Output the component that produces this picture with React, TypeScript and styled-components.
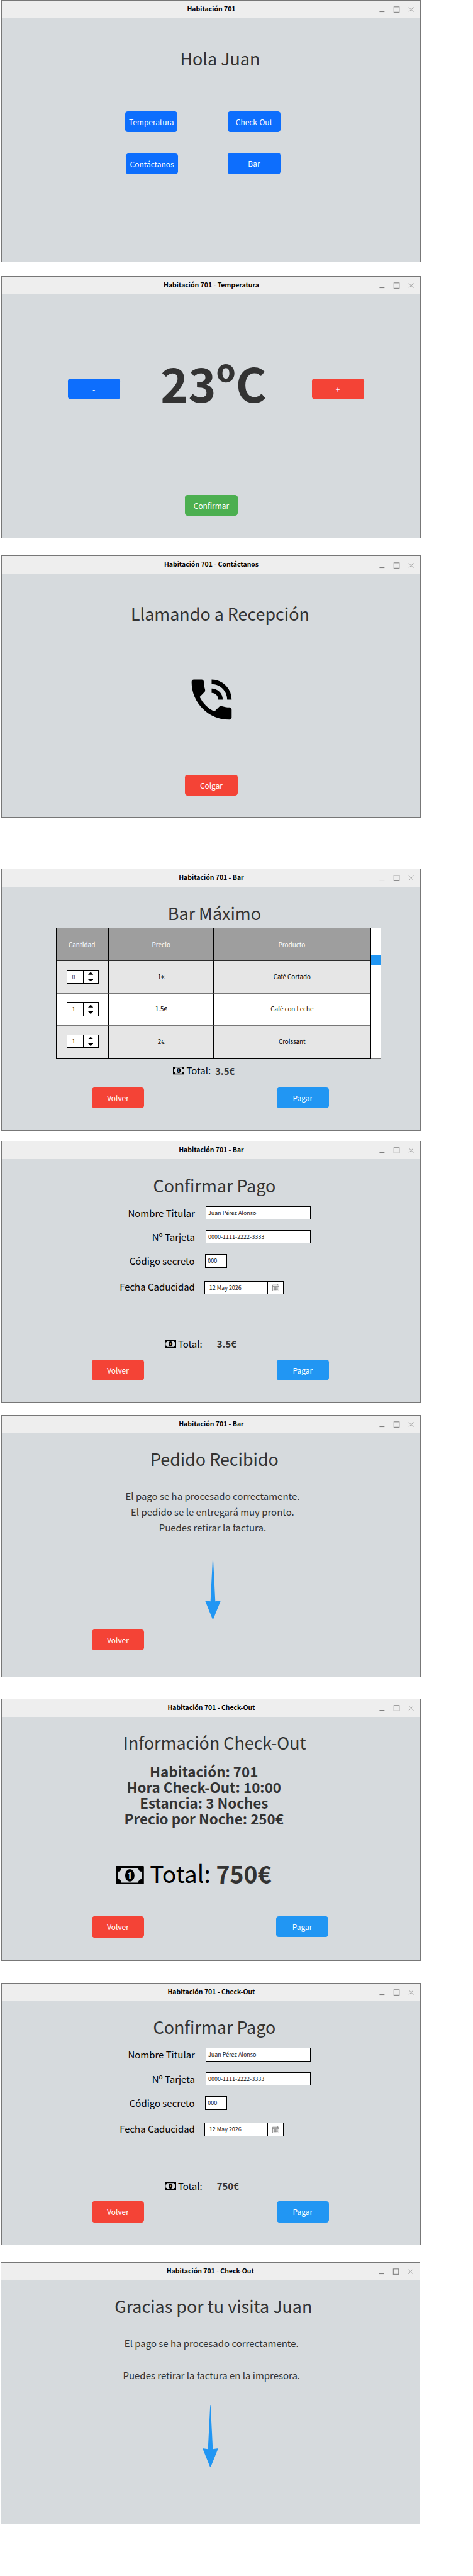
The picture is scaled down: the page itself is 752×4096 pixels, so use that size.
import React from "react";
import styled, { createGlobalStyle } from "styled-components";
import { MdPhoneInTalk } from "react-icons/md";

const SCALE = 0.8326;
const u = (n: number) => `${(n * SCALE).toFixed(3)}px`;

const colors = {
  ink: "#333333",
  frame: "#777777",
  bar: "#eeeeee",
  body: "#d6dadd",
  primary: "#0d6efd",
  danger: "#f44336",
  success: "#4caf50",
  info: "#2196f3",
};

const GlobalStyle = createGlobalStyle`
  *, *::before, *::after { box-sizing: border-box; }
  body { margin: 0; background: #ffffff; }
  #root { font-family: "Noto Sans CJK JP", "Noto Sans", sans-serif; }
`;

const Page = styled.main`
  display: flex;
  flex-direction: column;
  align-items: flex-start;
  min-height: 4096px;
  padding-left: ${u(3)};
  background: #ffffff;
`;

const Frame = styled.section<{ $gap: number; $outdent?: number }>`
  display: flex;
  flex-direction: column;
  flex: none;
  width: ${u(801)};
  height: ${u(501)};
  margin-top: ${(p) => u(p.$gap)};
  margin-left: ${(p) => u(-(p.$outdent ?? 0))};
  border: 1px solid ${colors.frame};
  background: ${colors.body};
`;

const TitleBar = styled.header`
  display: grid;
  grid-template-columns: 1fr auto 1fr;
  align-items: center;
  flex: none;
  height: ${u(34)};
  padding-bottom: ${u(2)};
  background: ${colors.bar};
`;

const Title = styled.h2`
  grid-column: 2;
  margin: 0;
  font-size: ${u(12.56)};
  line-height: ${u(20)};
  font-weight: 700;
  color: #000000;
  white-space: nowrap;
`;

const Controls = styled.div`
  display: flex;
  justify-content: flex-end;
  padding-right: ${u(12)};
  padding-top: ${u(2)};
  svg { display: block; }
`;

const Body = styled.div`
  display: flex;
  flex-direction: column;
`;

const Heading = styled.h1<{ $gap: number; $shift?: number }>`
  margin: ${(p) => u(p.$gap)} 0 0;
  padding-left: ${(p) => u(2 * (p.$shift ?? 6))};
  text-align: center;
  font-size: ${u(32.3)};
  line-height: ${u(40)};
  font-weight: 400;
  color: ${colors.ink};
`;

const Row = styled.div<{ $gap: number; $indent?: number; $space?: number }>`
  display: flex;
  align-items: flex-start;
  gap: ${(p) => u(p.$space ?? 0)};
  margin-top: ${(p) => u(p.$gap)};
  padding-left: ${(p) => u(p.$indent ?? 0)};
`;

const Centered = styled.div<{ $gap: number; $shift?: number }>`
  display: flex;
  justify-content: center;
  margin-top: ${(p) => u(p.$gap)};
  padding-left: ${(p) => u(2 * (p.$shift ?? 0))};
  svg { display: block; }
`;

const Button = styled.button<{ $color: string; $drop?: number; $nudge?: number }>`
  flex: none;
  width: ${u(100)};
  height: ${u(40)};
  margin: ${(p) => u(p.$drop ?? 0)} 0 0 ${(p) => u(p.$nudge ?? 0)};
  padding: 0;
  border: 0;
  border-radius: ${u(5)};
  background: ${(p) => p.$color};
  color: #ffffff;
  font-family: inherit;
  font-size: ${u(14.35)};
  line-height: ${u(40)};
  text-align: center;
`;

const ButtonColumn = styled.div<{ $space: number }>`
  display: flex;
  flex-direction: column;
  width: ${u(101)};
  gap: ${(p) => u(p.$space)};
`;

const Reading = styled.div`
  width: ${u(366)};
  padding-right: ${u(8.6)};
  text-align: center;
  font-size: ${u(89.7)};
  line-height: ${u(100)};
  font-weight: 700;
  color: ${colors.ink};
  white-space: nowrap;
`;

/* Product table */

const Table = styled.div`
  display: grid;
  grid-template-columns: ${u(100)} ${u(200)} 1fr;
  grid-template-rows: ${u(62)} ${u(62)} ${u(62)} 1fr;
  width: ${u(601)};
  height: ${u(251)};
  border: 1px solid #000000;
`;

const Cell = styled.div<{ $tone: "head" | "odd" | "even"; $last?: boolean; $end?: boolean; $lift?: number }>`
  display: flex;
  align-items: center;
  justify-content: center;
  padding-bottom: ${(p) => u(p.$lift ?? 0)};
  border-right: ${(p) => (p.$end ? "0" : "1px solid #000000")};
  border-bottom: ${(p) => (p.$last ? "0" : p.$tone === "head" ? "1px solid #2b2b2b" : "1px solid #777777")};
  background: ${(p) => ({ head: "#9e9e9e", odd: "#e6e6e6", even: "#ffffff" })[p.$tone]};
  color: ${(p) => (p.$tone === "head" ? "#ffffff" : "#000000")};
  font-size: ${(p) => u(p.$tone === "head" ? 11.95 : 11.75)};
  line-height: ${u(18)};
`;

const HeadLabel = styled.span<{ $pull?: number }>`
  padding-right: ${(p) => u(p.$pull ?? 0)};
`;

const Spinner = styled.div`
  display: flex;
  width: ${u(61)};
  height: ${u(26)};
  border: 1px solid #000000;
  background: #ffffff;
`;

const SpinnerValue = styled.span`
  width: ${u(31)};
  padding-right: ${u(6)};
  border-right: 1px solid #000000;
  text-align: center;
  font-size: ${u(10.8)};
  line-height: ${u(24)};
  color: ${colors.ink};
`;

const SpinnerKeys = styled.span`
  display: flex;
  flex: 1;
  flex-direction: column;
`;

const SpinnerKey = styled.span<{ $upper?: boolean }>`
  display: flex;
  flex: 1;
  align-items: center;
  justify-content: center;
  padding-right: ${u(1)};
  border-bottom: ${(p) => (p.$upper ? "1px solid #777777" : "0")};
`;

const Scrollbar = styled.div`
  width: ${u(19.4)};
  height: ${u(251)};
  padding-top: ${u(50)};
  border: 1px solid ${colors.frame};
  border-left: 0;
  background: #ffffff;
`;

const Thumb = styled.div`
  height: ${u(20)};
  background: ${colors.info};
`;

/* Payment form */

const Label = styled.label<{ $drop?: number; $width?: number }>`
  width: ${(p) => u(p.$width ?? 368)};
  margin-top: ${(p) => u(p.$drop ?? 1.3)};
  text-align: right;
  font-size: ${u(17.95)};
  line-height: ${u(24)};
  color: #000000;
`;

const Field = styled.div<{ $width: number; $pad?: number }>`
  display: flex;
  justify-content: space-between;
  width: ${(p) => u(p.$width)};
  height: ${u(26)};
  padding-left: ${(p) => u(p.$pad ?? 4.2)};
  border: 1px solid #000000;
  background: #ffffff;
  font-size: ${u(10.8)};
  line-height: ${u(24)};
  color: #222222;
  white-space: nowrap;
`;

const PickerKey = styled.span`
  display: flex;
  align-items: center;
  justify-content: center;
  width: ${u(29)};
  border-left: 1px solid #000000;
`;

/* Totals and messages */

const TotalIcon = styled.span<{ $drop: number }>`
  display: block;
  flex: none;
  margin-top: ${(p) => u(p.$drop)};
  svg { display: block; }
`;

const TotalText = styled.span<{ $large?: boolean; $left: number; $strong?: boolean; $drop?: number }>`
  margin-left: ${(p) => u(p.$left)};
  margin-top: ${(p) => u(p.$drop ?? 0)};
  font-size: ${(p) => u(p.$large ? 44.85 : 17.95)};
  line-height: ${(p) => u(p.$large ? 60 : 24)};
  font-weight: ${(p) => (p.$strong ? 700 : 400)};
  color: ${(p) => (p.$strong ? colors.ink : "#000000")};
  white-space: nowrap;
`;

const Message = styled.p<{ $gap: number; $shift: number }>`
  margin: ${(p) => u(p.$gap)} 0 0;
  padding-left: ${(p) => u(2 * p.$shift)};
  text-align: center;
  font-size: ${u(17.97)};
  line-height: ${u(30)};
  color: ${colors.ink};
`;

const Summary = styled.div`
  margin-top: ${u(20.1)};
  padding-right: ${u(28)};
  text-align: center;
  font-size: ${u(26.9)};
  line-height: ${u(30.1)};
  font-weight: 700;
  color: ${colors.ink};
`;

const MoneyIcon = ({ width }: { width: number }) => (
  <svg width={width * SCALE} height={(width * SCALE * 36) / 54} viewBox="0 0 54 36">
    <rect width="54" height="36" rx="1.5" fill="#000" />
    <path d="M11 4H43A7 7 0 0 0 50 11V25A7 7 0 0 0 43 32H11A7 7 0 0 0 4 25V11A7 7 0 0 0 11 4Z" fill={colors.body} />
    <ellipse cx="27" cy="18" rx="9" ry="12" fill="#000" />
    <text x="27" y="25" textAnchor="middle" fontFamily="Liberation Serif, serif" fontWeight="700" fontSize="21" fill={colors.body}>
      1
    </text>
  </svg>
);

const CalendarIcon = () => (
  <svg width={13 * SCALE} height={13 * SCALE} viewBox="0 0 13 13" fill="none" stroke="#777" strokeWidth="1">
    <path d="M.5 1.5H12.5V12.5H.5ZM.5 4H12.5M3 0V2.6M10 0V2.6" />
    <path d="M2 6.2H11M2 8.2H11M2 10.3H11M4.4 5.4V11.2M6.5 5.4V11.2M8.6 5.4V11.2" strokeWidth=".7" />
  </svg>
);

const ArrowDown = () => (
  <svg width={30 * SCALE} height={120 * SCALE} viewBox="0 0 30 120" fill={colors.info}>
    <path d="M14.7 0H15.3L19.6 84.5L30 83L15 120L0 83L10.4 84.5Z" />
  </svg>
);

const Caret = ({ up }: { up?: boolean }) => (
  <svg width={10 * SCALE} height={4.4 * SCALE} viewBox="0 0 10 4.4">
    <path d={up ? "M0 4.4L4.2 0H5.8L10 4.4Z" : "M0 0L4.2 4.4H5.8L10 0Z"} />
  </svg>
);

const AppWindow = ({ title, gap, outdent, children }: { title: string; gap: number; outdent?: number; children: React.ReactNode }) => (
  <Frame $gap={gap} $outdent={outdent}>
    <TitleBar>
      <Title>{title}</Title>
      <Controls>
        <svg width={66 * SCALE} height={12 * SCALE} viewBox="0 0 66 12" fill="none" stroke="#777" strokeWidth="1">
          <path d="M.5 10.3H10" strokeWidth="1.2" />
          <rect x="28" y="1" width="10.2" height="10.2" strokeWidth="1.2" />
          <path d="M56.5 1.8L65.3 10.6M65.3 1.8L56.5 10.6" strokeWidth=".8" />
        </svg>
      </Controls>
    </TitleBar>
    <Body>{children}</Body>
  </Frame>
);

const Actions = ({ gap }: { gap: number }) => (
  <Row $gap={gap} $indent={171} $space={253}>
    <Button $color={colors.danger}>Volver</Button>
    <Button $color={colors.info}>Pagar</Button>
  </Row>
);

const products = [
  { qty: 0, price: "1€", name: "Café Cortado" },
  { qty: 1, price: "1.5€", name: "Café con Leche" },
  { qty: 1, price: "2€", name: "Croissant" },
];

const ProductTable = () => (
  <Table>
    <Cell $tone="head"><HeadLabel $pull={3}>Cantidad</HeadLabel></Cell>
    <Cell $tone="head">Precio</Cell>
    <Cell $tone="head" $end><HeadLabel $pull={1}>Producto</HeadLabel></Cell>
    {products.map((item, i) => {
      const tone = i % 2 ? "even" : "odd";
      const last = i === products.length - 1;
      return (
        <React.Fragment key={item.name}>
          <Cell $tone={tone} $last={last} $lift={last ? 4 : 0}>
            <Spinner>
              <SpinnerValue>{item.qty}</SpinnerValue>
              <SpinnerKeys>
                <SpinnerKey $upper><Caret up /></SpinnerKey>
                <SpinnerKey><Caret /></SpinnerKey>
              </SpinnerKeys>
            </Spinner>
          </Cell>
          <Cell $tone={tone} $last={last} $lift={last ? 2 : 0}>{item.price}</Cell>
          <Cell $tone={tone} $last={last} $lift={last ? 2 : 0} $end>{item.name}</Cell>
        </React.Fragment>
      );
    })}
  </Table>
);

const PaymentForm = ({ total }: { total: string }) => (
  <>
    <Heading $gap={28.9}>Confirmar Pago</Heading>
    <Row $gap={20.1} $space={20}>
      <Label>Nombre Titular</Label>
      <Field $width={201}>Juan Pérez Alonso</Field>
    </Row>
    <Row $gap={20} $space={20}>
      <Label>Nº Tarjeta</Label>
      <Field $width={201}>0000-1111-2222-3333</Field>
    </Row>
    <Row $gap={20} $space={19.5}>
      <Label $width={367.5}>Código secreto</Label>
      <Field $width={42}>000</Field>
    </Row>
    <Row $gap={25} $space={18}>
      <Label $drop={-0.8}>Fecha Caducidad</Label>
      <Field $width={151} $pad={8.4}>
        12 May 2026
        <PickerKey><CalendarIcon /></PickerKey>
      </Field>
    </Row>
    <Row $gap={82.7} $indent={310}>
      <TotalIcon $drop={5}><MoneyIcon width={22} /></TotalIcon>
      <TotalText $left={3.6}>Total:</TotalText>
      <TotalText $left={27.8} $strong>{total}</TotalText>
    </Row>
    <Actions gap={17.5} />
  </>
);

export default function App() {
  return (
    <Page>
      <GlobalStyle />

      <AppWindow title="Habitación 701" gap={0}>
        <Heading $gap={56.1} $shift={16.8}>Hola Juan</Heading>
        <Row $gap={81} $indent={235} $space={95}>
          <ButtonColumn $space={41}>
            <Button $color={colors.primary}>Temperatura</Button>
            <Button $color={colors.primary} $nudge={1}>Contáctanos</Button>
          </ButtonColumn>
          <ButtonColumn $space={40}>
            <Button $color={colors.primary}>Check-Out</Button>
            <Button $color={colors.primary}>Bar</Button>
          </ButtonColumn>
        </Row>
      </AppWindow>

      <AppWindow title="Habitación 701 - Temperatura" gap={26}>
        <Row $gap={117.9} $indent={125}>
          <Button $color={colors.primary} $drop={43.1}>-</Button>
          <Reading>23ºC</Reading>
          <Button $color={colors.danger} $drop={43.1}>+</Button>
        </Row>
        <Centered $gap={165.1}>
          <Button $color={colors.success}>Confirmar</Button>
        </Centered>
      </AppWindow>

      <AppWindow title="Habitación 701 - Contáctanos" gap={33}>
        <Heading $gap={56.1} $shift={16.8}>Llamando a Recepción</Heading>
        <Centered $gap={92.4} $shift={1.2}>
          <MdPhoneInTalk size={102 * SCALE} color="#000" />
        </Centered>
        <Centered $gap={92.5}>
          <Button $color={colors.danger}>Colgar</Button>
        </Centered>
      </AppWindow>

      <AppWindow title="Habitación 701 - Bar" gap={97}>
        <Heading $gap={28.9}>Bar Máximo</Heading>
        <Row $gap={9.1} $indent={103}>
          <ProductTable />
          <Scrollbar><Thumb /></Scrollbar>
        </Row>
        <Row $gap={9.2} $indent={326}>
          <TotalIcon $drop={5.1}><MoneyIcon width={22} /></TotalIcon>
          <TotalText $left={3.9}>Total:</TotalText>
          <TotalText $left={8.2} $drop={1} $strong>3.5€</TotalText>
        </Row>
        <Actions gap={18.8} />
      </AppWindow>

      <AppWindow title="Habitación 701 - Bar" gap={19}>
        <PaymentForm total="3.5€" />
      </AppWindow>

      <AppWindow title="Habitación 701 - Bar" gap={22}>
        <Heading $gap={28.9}>Pedido Recibido</Heading>
        <Message $gap={37.4} $shift={2.4}>
          El pago se ha procesado correctamente.
          <br />
          El pedido se le entregará muy pronto.
          <br />
          Puedes retirar la factura.
        </Message>
        <Centered $gap={40.7} $shift={3.5}><ArrowDown /></Centered>
        <Row $gap={18} $indent={171}>
          <Button $color={colors.danger}>Volver</Button>
        </Row>
      </AppWindow>

      <AppWindow title="Habitación 701 - Check-Out" gap={41}>
        <Heading $gap={28.9} $shift={6.5}>Información Check-Out</Heading>
        <Summary>
          Habitación: 701
          <br />
          Hora Check-Out: 10:00
          <br />
          Estancia: 3 Noches
          <br />
          Precio por Noche: 250€
        </Summary>
        <Row $gap={59.7} $indent={217.3}>
          <TotalIcon $drop={14.9}><MoneyIcon width={53.8} /></TotalIcon>
          <TotalText $large $left={10.8}>Total:</TotalText>
          <TotalText $large $left={10.3} $drop={1} $strong>750€</TotalText>
        </Row>
        <Row $gap={49.9} $indent={171} $space={252}>
          <Button $color={colors.danger} $drop={1}>Volver</Button>
          <Button $color={colors.info}>Pagar</Button>
        </Row>
      </AppWindow>

      <AppWindow title="Habitación 701 - Check-Out" gap={42}>
        <PaymentForm total="750€" />
      </AppWindow>

      <AppWindow title="Habitación 701 - Check-Out" gap={32} outdent={2}>
        <Heading $gap={28.9}>Gracias por tu visita Juan</Heading>
        <Message $gap={37.4} $shift={2.4}>El pago se ha procesado correctamente.</Message>
        <Message $gap={30.3} $shift={2.4}>Puedes retirar la factura en la impresora.</Message>
        <Centered $gap={40.7} $shift={-1.5}><ArrowDown /></Centered>
      </AppWindow>
    </Page>
  );
}
